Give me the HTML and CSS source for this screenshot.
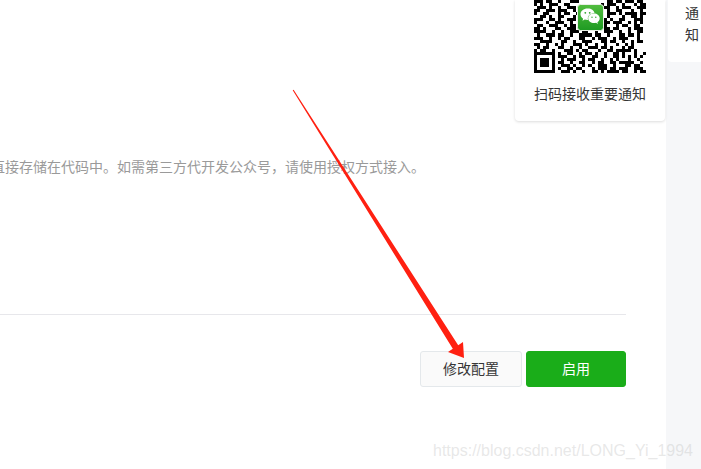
FILE: index.html
```html
<!DOCTYPE html>
<html lang="zh-CN">
<head>
<meta charset="utf-8">
<title>修改配置</title>
<link rel="stylesheet" href="styles.css">
</head>
<body>
<div class="page">
  <main class="main">
    <div class="top">
      <aside class="qr-card">
        <div class="qr">
          <svg class="qr-code" viewBox="0 0 37 24" width="112" height="73" shape-rendering="crispEdges" aria-hidden="true">
            <path class="qr-modules" d="M0 .5h3m1 0h2m2 0h1m3 0h3m9 0h2m1 0h2m1 0h3m1 0h2
            M0 1.5h1m1 0h1m2 0h3m2 0h2m10 0h1m1 0h3m2 0h1m3 0h1m1 0h2
            M1 2.500h3m1 0h1m2 0h1m2 0h3m9 0h2m2 0h1m1 0h3m2 0h3
            M0 3.500h2m2 0h3m1 0h3m2 0h1m10 0h1m2 0h2m3 0h1m2 0h1
            M0 4.500h1m2 0h2m3 0h1m1 0h2m2 0h1m9 0h3m1 0h1m1 0h4m1 0h2
            M2 5.500h2m1 0h1m2 0h2m3 0h1m10 0h1m4 0h1m2 0h2m1 0h1
            M0 6.500h3m2 0h2m1 0h1m2 0h3m9 0h1m1 0h1m2 0h2m3 0h3
            M0 7.500h1m3 0h1m2 0h3m2 0h1m10 0h2m1 0h3m2 0h1m1 0h1m1 0h1
            M1 8.500h2m2 0h3m2 0h1m1 0h2m9 0h1m3 0h1m1 0h2m2 0h2
            M0 9.500h2m1 0h1m3 0h2m2 0h3m9 0h2m1 0h2m3 0h1m1 0h3
            M0 10.500h4m2 0h1m2 0h1m2 0h3m1 0h2m2 0h1m2 0h3m2 0h1m2 0h1m2 0h2
            M1 11.500h1m2 0h3m1 0h2m2 0h1m2 0h4m1 0h2m2 0h1m3 0h2m1 0h2m1 0h1
            M0 12.500h3m2 0h1m2 0h1m1 0h2m3 0h2m2 0h1m1 0h3m2 0h1m1 0h3m3 0h1
            M2 13.500h4m3 0h2m2 0h1m2 0h3m3 0h2m1 0h2m2 0h1m2 0h1m1 0h2
            M0 14.500h2m2 0h1m2 0h1m1 0h1m3 0h3m1 0h1m2 0h1m2 0h1m3 0h1m2 0h1m1 0h1
            M1 15.500h1m1 0h2m3 0h2m2 0h1m2 0h1m2 0h3m1 0h2m1 0h1m3 0h1m1 0h2
            M0 16.500h1m1 0h2m2 0h1m3 0h3m1 0h1m1 0h2m3 0h1m2 0h2m1 0h5m1 0h1
            M0 17.500h7m1 0h1m2 0h2m2 0h1m1 0h2m1 0h1m2 0h1m2 0h2m1 0h1m3 0h1m2 0h1
            M0 18.500h1m5 0h1m1 0h3m2 0h1m1 0h2m2 0h2m2 0h1m2 0h2m1 0h1m1 0h1m1 0h1m1 0h1
            M0 19.500h1m1 0h3m1 0h1m2 0h1m1 0h3m2 0h1m1 0h2m2 0h1m2 0h1m1 0h1m3 0h1m2 0h1
            M0 20.500h1m1 0h3m1 0h1m1 0h2m2 0h1m2 0h2m2 0h1m1 0h2m2 0h2m1 0h5m2 0h1
            M0 21.500h1m1 0h3m1 0h1m2 0h3m1 0h1m2 0h1m1 0h1m2 0h3m2 0h1m3 0h2m1 0h2
            M0 22.500h1m5 0h1m1 0h1m2 0h2m1 0h2m3 0h1m1 0h3m1 0h2m1 0h3m2 0h3
            M0 23.500h7m2 0h3m1 0h1m2 0h1m2 0h2m1 0h1m1 0h4m1 0h2m2 0h1m1 0h2"/>
          </svg>
          <svg class="qr-logo" viewBox="0 0 27 27" width="27" height="27" aria-hidden="true">
            <defs>
              <linearGradient id="logoGreen" x1="0" y1="0" x2="0" y2="1">
                <stop offset="0" stop-color="#52bd3f"/>
                <stop offset="1" stop-color="#1e9a22"/>
              </linearGradient>
            </defs>
            <rect x=".5" y=".5" width="26" height="26" rx="3" fill="url(#logoGreen)" stroke="#e9efe6"/>
            <path fill="#fff" d="M10.500 4.500c-3.900 0-7 2.600-7 5.800 0 1.800 1 3.300 2.600 4.400l-.6 2 2.300-1.200c.8.200 1.700.400 2.700.400h.6c-.2-.5-.3-1-.3-1.500 0-2.900 2.800-5.200 6.200-5.200h.6c-.6-2.700-3.400-4.700-6.500-4.700z"/>
            <path fill="#fff" d="M17 9.500c-3.200 0-5.800 2.100-5.800 4.800s2.600 4.800 5.800 4.800c.7 0 1.400-.1 2-.3l1.900 1.100-.5-1.700c1.400-.9 2.300-2.300 2.300-3.900 0-2.700-2.600-4.800-5.700-4.800z"/>
            <circle cx="8.300" cy="8.800" r=".9" fill="#2ea52c"/>
            <circle cx="12.700" cy="8.800" r=".9" fill="#2ea52c"/>
            <circle cx="15" cy="13.200" r=".7" fill="#2ea52c"/>
            <circle cx="18.800" cy="13.200" r=".7" fill="#2ea52c"/>
          </svg>
        </div>
        <p class="qr-caption">扫码接收重要通知</p>
      </aside>
    </div>
    <p class="hint">直接存储在代码中。如需第三方代开发公众号，请使用授权方式接入。</p>
    <hr class="divider">
    <div class="actions">
      <button class="btn btn-default" type="button">修改配置</button>
      <button class="btn btn-primary" type="button">启用</button>
    </div>
  </main>
  <aside class="side">
    <div class="side-card">通知</div>
  </aside>
</div>
<svg class="arrow" viewBox="0 0 701 469" width="701" height="469" aria-hidden="true">
  <polygon points="292.700,90.300 293.600,89.700 458.200,345.300 463,342 464,358 448,352 452.800,348.700"/>
</svg>
<div class="watermark">https://blog.csdn.net/LONG_Yi_1994</div>
</body>
</html>
```
FILE: styles.css
```css
* {
  box-sizing: border-box;
}

html,
body {
  margin: 0;
  height: 100%;
  overflow: hidden;
}

body {
  position: relative;
  background: #f6f7f9;
  color: #353535;
  font-family: "Liberation Sans", "Noto Sans CJK SC", sans-serif;
  font-size: 14px;
}

.page {
  display: flex;
  height: 469px;
}

.main {
  display: flex;
  flex-direction: column;
  width: 666px;
  background: #fff;
}

.top {
  display: flex;
  justify-content: flex-end;
  padding-right: 1px;
}

.qr-card {
  width: 150px;
  height: 121px;
  padding: 0 19px 16px;
  background: #fff;
  border-radius: 0 0 4px 4px;
  box-shadow: 0 1px 3px rgba(0, 0, 0, 0.14);
}

.qr {
  position: relative;
  height: 73px;
}

.qr-code {
  display: block;
}

.qr-modules {
  fill: none;
  stroke: #000;
  stroke-width: 1;
}

.qr-logo {
  position: absolute;
  left: 43px;
  top: 4px;
}

.qr-caption {
  margin: 11px 0 0;
  line-height: 20px;
  white-space: nowrap;
}

.hint {
  margin: 36px 0 0 -9px;
  line-height: 20px;
  color: #9a9a9a;
  white-space: nowrap;
}

.divider {
  width: 626px;
  height: 1px;
  margin: 137px 0 0;
  border: 0;
  background: #e7e7eb;
}

.actions {
  display: flex;
  justify-content: flex-end;
  gap: 4px;
  width: 626px;
  margin-top: 36px;
}

.btn {
  height: 36px;
  padding: 0 0 2px;
  border-radius: 3px;
  font: inherit;
}

.btn-default {
  width: 102px;
  background: #fafafa;
  border: 1px solid #e4e8eb;
  color: #353535;
}

.btn-primary {
  width: 100px;
  background: #1aad19;
  border: 1px solid #1aad19;
  color: #fff;
}

.side {
  flex: 1;
  padding-left: 2px;
}

.side-card {
  width: 33px;
  height: 62px;
  padding: 2px 0 0 17px;
  background: #fff;
  border-radius: 0 0 0 4px;
  line-height: 22px;
  overflow: hidden;
}

.arrow {
  position: absolute;
  left: 0;
  top: 0;
  pointer-events: none;
}

.arrow polygon {
  fill: #ff2011;
}

.watermark {
  position: absolute;
  left: 433px;
  top: 441px;
  font-size: 16px;
  line-height: 20px;
  color: rgba(190, 190, 190, 0.36);
  white-space: nowrap;
}
```
